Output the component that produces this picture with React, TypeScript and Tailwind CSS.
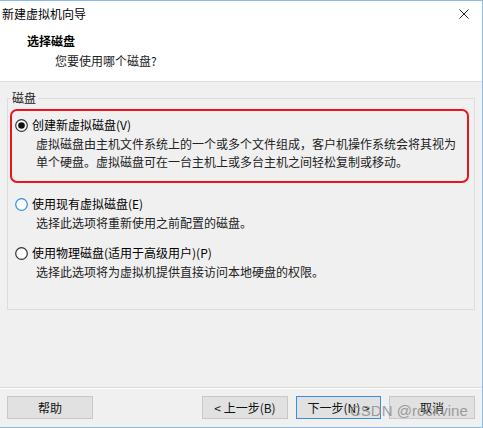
import React from "react";

const font = { fontFamily: '"Noto Sans CJK SC", "Microsoft YaHei", sans-serif' };

function Radio({ state }: { state: "checked" | "focus" | "plain" }) {
  if (state === "checked") {
    return (
      <svg width="13" height="13" viewBox="0 0 13 13" className="shrink-0">
        <circle cx="6.5" cy="6.5" r="5.8" fill="#fff" stroke="#333" strokeWidth="1.2" />
        <circle cx="6.5" cy="6.5" r="3.3" fill="#111" />
      </svg>
    );
  }
  return (
    <svg width="13" height="13" viewBox="0 0 13 13" className="shrink-0">
      <circle
        cx="6.5"
        cy="6.5"
        r="5.8"
        fill="#fff"
        stroke={state === "focus" ? "#2f8de4" : "#333"}
        strokeWidth="1.2"
      />
    </svg>
  );
}

function Btn({ children, primary }: { children: React.ReactNode; primary?: boolean }) {
  return (
    <div
      className={
        "h-[23px] flex items-center justify-center text-[12px] text-[#111] bg-[#e1e1e1] border " +
        (primary ? "border-[#3a8ee0] w-[85px]" : "border-[#c8c8c8] w-[86px]")
      }
    >
      {children}
    </div>
  );
}

export default function App() {
  return (
    <div
      className="relative w-[483px] h-[428px] overflow-hidden bg-[#f0f0f0] border-t border-r border-b border-[#8cbce6] flex flex-col"
      style={font}
    >
      {/* header */}
      <div className="h-[81px] bg-white border-b border-[#dcdcdc] shrink-0">
        <div className="h-[26px] flex items-center justify-between pl-[2px] pr-[13px]">
          <span className="text-[12px] text-black leading-[18px]">新建虚拟机向导</span>
          <svg width="10" height="10" viewBox="0 0 10 10">
            <path d="M0.5 0.5 L9.5 9.5 M9.5 0.5 L0.5 9.5" stroke="#222" strokeWidth="1" />
          </svg>
        </div>
        <div className="pl-[27px] pt-[5px] text-[12px] leading-[18px] font-bold text-black">选择磁盘</div>
        <div className="pl-[55px] pt-[2px] text-[12px] leading-[18px] text-[#222]">您要使用哪个磁盘?</div>
      </div>

      {/* body */}
      <div className="h-[305px] shrink-0 pt-[8px] pl-[7px]">
        <fieldset className="w-[468px] h-[220px] border border-[#dcdcdc] m-0 p-0">
          <legend className="ml-[2px] px-[2px] text-[12px] leading-[16px] text-[#222]">磁盘</legend>
          <div className="mt-[3px] ml-[2px] mr-[5px] h-[74px] border-2 border-[#e8141e] rounded-[7px] pt-[5px] pl-[3px]">
            <div className="flex items-center gap-[4px] h-[18px] text-[12px] text-black">
              <Radio state="checked" />
              <span>创建新虚拟磁盘(V)</span>
            </div>
            <div className="pl-[21px] mt-[1px] text-[12px] leading-[18px] text-[#222]">
              <div>虚拟磁盘由主机文件系统上的一个或多个文件组成，客户机操作系统会将其视为</div>
              <div>单个硬盘。虚拟磁盘可在一台主机上或多台主机之间轻松复制或移动。</div>
            </div>
          </div>

          <div className="pl-[7px] mt-[12px]">
            <div className="flex items-center gap-[4px] h-[18px] text-[12px] text-black">
              <Radio state="focus" />
              <span>使用现有虚拟磁盘(E)</span>
            </div>
            <div className="pl-[21px] mt-[1px] text-[12px] leading-[18px] text-[#222]">
              选择此选项将重新使用之前配置的磁盘。
            </div>
          </div>

          <div className="pl-[7px] mt-[12px]">
            <div className="flex items-center gap-[4px] h-[18px] text-[12px] text-black">
              <Radio state="plain" />
              <span>使用物理磁盘(适用于高级用户)(P)</span>
            </div>
            <div className="pl-[21px] mt-[1px] text-[12px] leading-[18px] text-[#222]">
              选择此选项将为虚拟机提供直接访问本地硬盘的权限。
            </div>
          </div>
        </fieldset>
      </div>

      {/* footer */}
      <div className="border-t border-[#dadada] flex-1">
        <div className="border-t border-white flex items-center px-[7px] pt-[7px]">
          <Btn>帮助</Btn>
          <div className="flex-1" />
          <div className="flex gap-[8px]">
            <Btn>&lt; 上一步(B)</Btn>
            <Btn primary>下一步(N) &gt;</Btn>
            <Btn>取消</Btn>
          </div>
        </div>
      </div>

      <div
        className="absolute left-[350px] top-[400px] text-[15px] leading-[20px] text-[#8a8a8a] opacity-80 pointer-events-none"
        style={{ fontFamily: '"Liberation Sans", Arial, sans-serif' }}
      >
        CSDN @rockvine
      </div>
    </div>
  );
}
